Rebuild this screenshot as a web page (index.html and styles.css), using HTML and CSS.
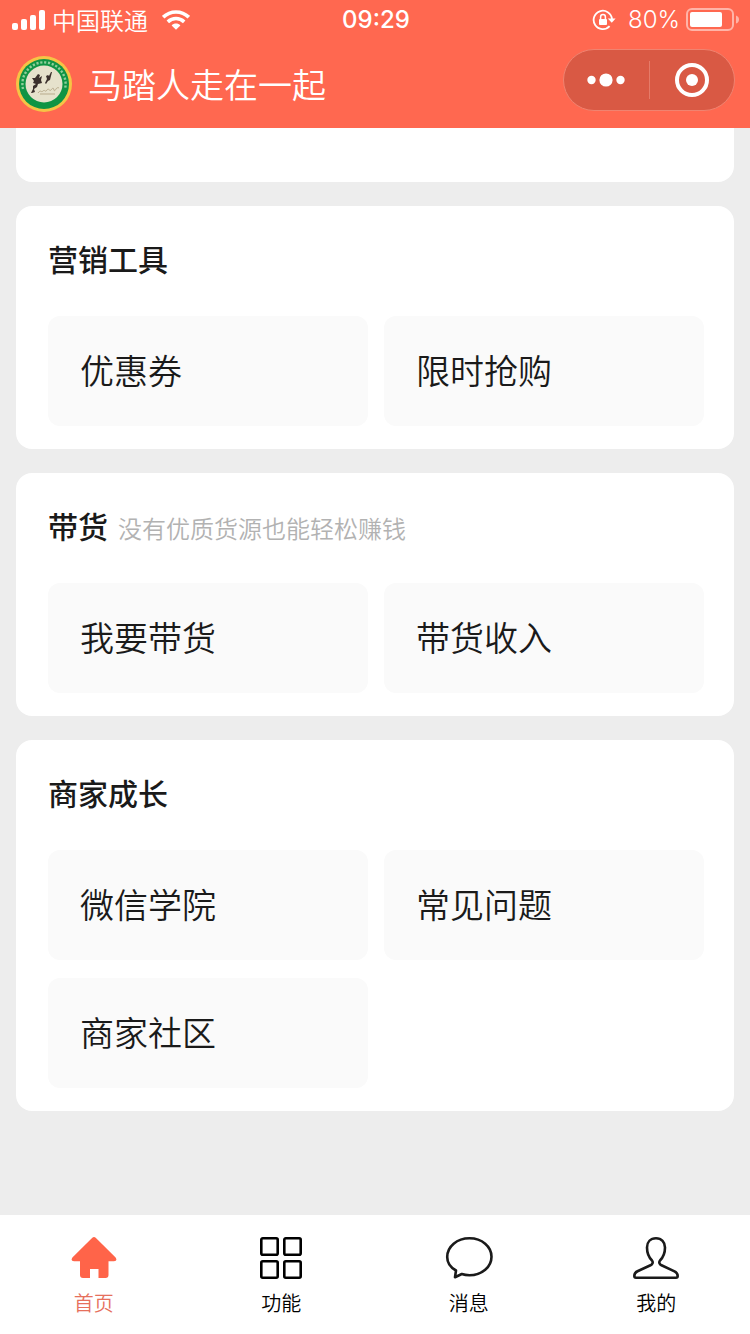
FILE: index.html
```html
<!DOCTYPE html>
<html lang="zh-CN">

<head>
    <meta charset="UTF-8">
    <meta name="viewport" content="width=device-width, initial-scale=1.0">
    <title>马踏人走在一起</title>
    <link rel="stylesheet" href="styles.css">
</head>

<body>
    <header class="header">
        <div class="status">
            <div class="status-left">
                <svg viewBox="0 0 34 20" width="34" height="20" fill="#fff" aria-hidden="true">
                    <rect x="0" y="13" width="6" height="7" rx="2" />
                    <rect x="9" y="9" width="6" height="11" rx="2" />
                    <rect x="18" y="5" width="6" height="15" rx="2" />
                    <rect x="27" y="0" width="6" height="20" rx="2" />
                </svg>
                <span class="carrier">中国联通</span>
                <svg viewBox="0 0 28 20" width="28" height="20" fill="none" stroke="#fff" stroke-width="3.6" aria-hidden="true">
                    <path d="M1.2 7.2C8.4 .2 19.6 .2 26.8 7.2" />
                    <path d="M5.8 11.8C10.6 7.4 17.4 7.4 22.2 11.8" />
                    <path d="M9.6 15.4C12 13 16 13 18.4 15.4L14 19.8Z" fill="#fff" stroke="none" />
                </svg>
            </div>
            <time class="clock">09:29</time>
            <div class="status-right">
                <svg viewBox="0 0 24 22" width="24" height="22" fill="none" stroke="#fff" stroke-width="1.8" aria-hidden="true">
                    <path d="M17.6 17.2A9.2 9.2 0 1 1 20 10" />
                    <path d="M15.8 9.6H23.6L19.8 13.8Z" fill="#fff" stroke="none" />
                    <rect x="7" y="10" width="8" height="6" rx="1" fill="#fff" stroke="none" />
                    <path d="M8.6 10.5V8A2.4 2.4 0 0 1 13.4 8V10.5" stroke-width="1.5" />
                </svg>
                <span class="percent">80%</span>
                <svg viewBox="0 0 54 24" width="54" height="24" aria-hidden="true">
                    <rect x="1" y="1" width="46" height="21" rx="5" fill="none" stroke="#fff" stroke-opacity=".5" stroke-width="2" />
                    <rect x="4" y="4" width="32" height="15" rx="2" fill="#fff" />
                    <path d="M50 7.5Q53 8.5 53 11.5T50 15.5Z" fill="#fff" fill-opacity=".5" />
                </svg>
            </div>
        </div>

        <div class="navbar">
            <svg viewBox="0 0 56 56" width="56" height="56" aria-hidden="true">
                <circle cx="28" cy="28" r="28" fill="#f6c445" />
                <circle cx="28" cy="28" r="25" fill="#0f9444" />
                <path d="M7 33A21.6 21.6 0 1 1 49 33" fill="none" stroke="#8fcf9a" stroke-width="2.4" stroke-dasharray="2.2 1.7" />
                <circle cx="28" cy="28" r="18.5" fill="#e6e2cc" />
                <g fill="#3b302c">
                    <path d="M22 18l2 1-1 3 3-2-1 4 1 3-4 1-1 3-3 2 1 3-3 1-1 0 2-4 0-3 3-2-3-1 1-2-2-3 3 0Z" />
                    <path d="M35 16l1 0-1 4-1 4-2 1-2 3-1-1 2-4-1-3 2-1 1 1Z" />
                </g>
                <path d="M22 37c3-4 3 0 5-2s2 2 4-1 2 2 4 0 2-3 3 0 2-4 5-2M24 38h15" fill="none" stroke="#b8ab8c" stroke-width="1" />
            </svg>
            <h1 class="name">马踏人走在一起</h1>
            <div class="capsule">
                <button type="button" class="capsule-btn" aria-label="更多">
                    <svg viewBox="0 0 38 14" width="38" height="14" fill="#fff">
                        <circle cx="4.500" cy="7" r="4.2" />
                        <circle cx="19" cy="7" r="6.6" />
                        <circle cx="33.500" cy="7" r="4.2" />
                    </svg>
                </button>
                <button type="button" class="capsule-btn" aria-label="关闭">
                    <svg viewBox="0 0 34 34" width="34" height="34">
                        <circle cx="17" cy="17" r="15" fill="none" stroke="#fff" stroke-width="4" />
                        <circle cx="17" cy="17" r="6" fill="#fff" />
                    </svg>
                </button>
            </div>
        </div>
    </header>

    <main class="content">
        <section class="card card-cut"></section>

        <section class="card">
            <div class="card-head">
                <h2 class="card-title">营销工具</h2>
            </div>
            <div class="tiles">
                <a class="tile" href="#coupon">优惠券</a>
                <a class="tile" href="#flash-sale">限时抢购</a>
            </div>
        </section>

        <section class="card">
            <div class="card-head">
                <h2 class="card-title">带货</h2>
                <span class="card-note">没有优质货源也能轻松赚钱</span>
            </div>
            <div class="tiles">
                <a class="tile" href="#promote">我要带货</a>
                <a class="tile" href="#income">带货收入</a>
            </div>
        </section>

        <section class="card">
            <div class="card-head">
                <h2 class="card-title">商家成长</h2>
            </div>
            <div class="tiles">
                <a class="tile" href="#school">微信学院</a>
                <a class="tile" href="#faq">常见问题</a>
                <a class="tile" href="#community">商家社区</a>
            </div>
        </section>
    </main>

    <nav class="tabbar">
        <a class="tab active" href="#home">
            <svg viewBox="0 0 48 46" width="48" height="46" fill="#ff6449">
                <path d="M22.3 2.7Q24 1.2 25.7 2.7L45.6 22.5Q47.8 26.2 44 26.2H38.5V40Q38.5 43 35.5 43H28.5V34H20V43H13Q10 43 10 40V26.2H4Q.2 26.2 2.4 22.5Z" />
            </svg>
            <span>首页</span>
        </a>
        <a class="tab" href="#tools">
            <svg viewBox="0 0 48 46" width="48" height="46" fill="none" stroke="#000" stroke-width="2.6">
                <rect x="4.3" y="3.3" width="16.4" height="16.4" rx="1.5" />
                <rect x="27.3" y="3.3" width="16.4" height="16.4" rx="1.5" />
                <rect x="4.3" y="26.3" width="16.4" height="16.4" rx="1.5" />
                <rect x="27.3" y="26.3" width="16.4" height="16.4" rx="1.5" />
            </svg>
            <span>功能</span>
        </a>
        <a class="tab" href="#messages">
            <svg viewBox="0 0 48 46" width="48" height="46" fill="none" stroke="#1a1a1a" stroke-width="2.6" stroke-linejoin="round">
                <path d="M11 35.500C5.500 32.500 2.200 27.500 2.200 22C2.200 11.500 12 3.300 24.500 3.300S46.500 11.500 46.500 21.700S37 40.200 24.500 40.200C21.500 40.200 19 39.800 16.800 39L10 42.200Z" />
            </svg>
            <span>消息</span>
        </a>
        <a class="tab" href="#mine">
            <svg viewBox="0 0 48 46" width="48" height="46" fill="none" stroke="#1a1a1a" stroke-width="2.6" stroke-linejoin="round">
                <path d="M24 3.300C18.500 3.300 15 7 15 12.500C15 18 17 22.500 20 25.500C21.300 27 20.700 29.200 18.500 30.300L5.500 36.300C3 37.500 2.300 39 2.300 41Q2.300 42.700 4 42.700H44Q45.700 42.700 45.700 41C45.700 39 45 37.500 42.500 36.300L29.500 30.300C27.300 29.200 26.700 27 28 25.500C31 22.500 33 18 33 12.500C33 7 29.500 3.300 24 3.300Z" />
            </svg>
            <span>我的</span>
        </a>
    </nav>
</body>

</html>
```

FILE: styles.css
```css
* {
    box-sizing: border-box;
}

body {
    margin: 0;
    min-height: 100vh;
    display: flex;
    flex-direction: column;
    background-color: #ededed;
    font-family: "Noto Sans CJK SC", sans-serif;
    font-weight: 350;
    color: #1a1a1a;
}

a {
    color: inherit;
    text-decoration: none;
}

svg {
    display: block;
    flex: none;
}

/* header */
.header {
    position: sticky;
    top: 0;
    z-index: 1;
    height: 128px;
    background-color: #ff6850;
    color: #fff;
}

.status {
    display: grid;
    grid-template-columns: 1fr auto 1fr;
    align-items: center;
    height: 40px;
    padding: 0 10px 0 12px;
    font-size: 24px;
    line-height: 40px;
}

.status-left,
.status-right {
    display: flex;
    align-items: center;
    gap: 6px;
}

.carrier {
    margin-right: 8px;
}

.clock {
    font-family: Inter, sans-serif;
    font-weight: 500;
}

.status-right {
    justify-content: flex-end;
    font-family: Inter, sans-serif;
    font-weight: 300;
}

.percent {
    margin-left: 6px;
}

.navbar {
    display: flex;
    align-items: center;
    height: 88px;
    padding: 0 15px 0 16px;
}

.name {
    flex: 1;
    margin: 0 0 0 16px;
    font-size: 34px;
    font-weight: 350;
    line-height: 48px;
}

.capsule {
    display: flex;
    width: 172px;
    height: 62px;
    margin-bottom: 8px;
    border: 1px solid #f08370;
    border-radius: 31px;
    background-color: #d95944;
}

.capsule-btn {
    flex: 1;
    display: flex;
    align-items: center;
    justify-content: center;
    margin: 11px 0;
    padding: 0;
    border: none;
    background: none;
    cursor: pointer;
}

.capsule-btn + .capsule-btn {
    border-left: 1px solid #e57b69;
}

/* cards */
.content {
    flex: 1;
    display: flex;
    flex-direction: column;
    gap: 24px;
    padding: 0 16px 24px;
}

.card {
    padding: 30px 30px 23px 32px;
    border-radius: 16px;
    background-color: #fff;
}

.card-cut {
    padding: 0;
    height: 54px;
    border-radius: 0 0 16px 16px;
}

.card-head {
    display: flex;
    align-items: baseline;
    gap: 10px;
    height: 44px;
    margin-bottom: 36px;
}

.card-title {
    margin: 0;
    font-size: 30px;
    font-weight: 500;
    line-height: 44px;
}

.card-note {
    font-size: 24px;
    color: #b2b2b2;
}

.tiles {
    display: grid;
    grid-template-columns: 1fr 1fr;
    gap: 18px 16px;
}

.tile {
    height: 110px;
    padding: 0 32px;
    border-radius: 12px;
    background-color: #fafafa;
    font-size: 34px;
    line-height: 108px;
}

/* bottom tabs */
.tabbar {
    position: sticky;
    bottom: 0;
    display: flex;
    height: 119px;
    background-color: #fff;
}

.tab {
    flex: 1;
    display: flex;
    flex-direction: column;
    align-items: center;
    gap: 6px;
    padding-top: 20px;
    font-size: 20px;
    line-height: 32px;
    color: #000;
}

.tab.active {
    color: #e6705c;
}
```
